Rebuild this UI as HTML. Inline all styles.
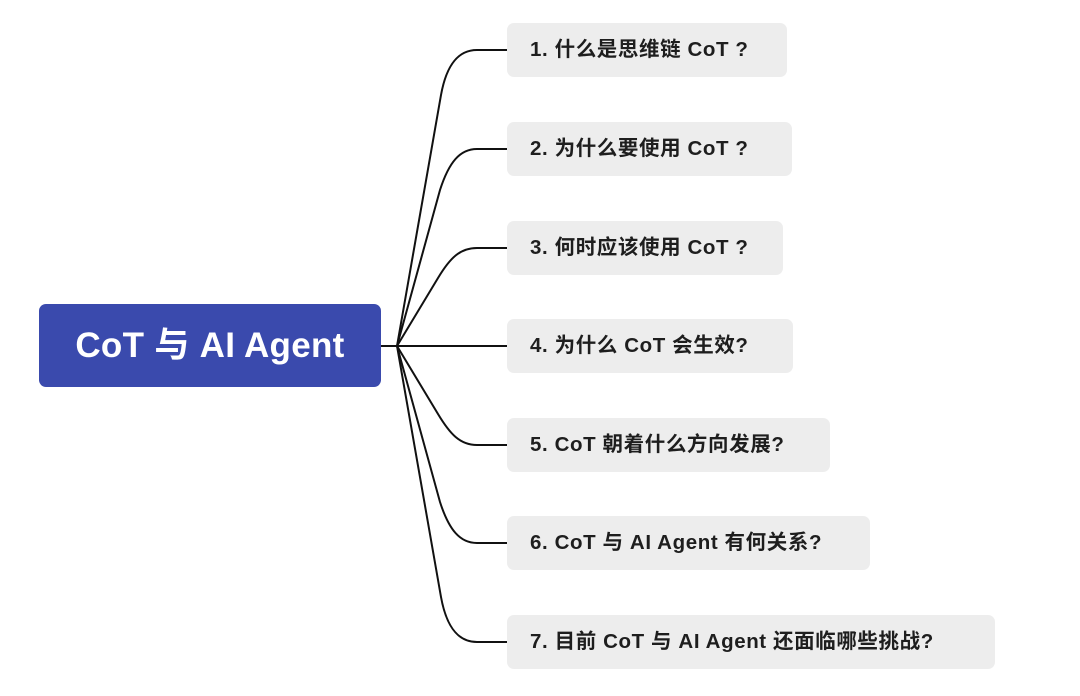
<!DOCTYPE html>
<html><head><meta charset="utf-8"><style>
body{margin:0;width:1080px;height:696px;background:#fff;position:relative;overflow:hidden;font-family:"Liberation Sans","Noto Sans CJK SC",sans-serif}
.c{position:absolute;left:39px;top:304px;width:342px;height:83px;background:#3a4aad;border-radius:7px;color:#fff;font-size:35px;font-weight:bold;line-height:83px;text-align:center;letter-spacing:0.3px}
.b{position:absolute;left:507px;height:54px;background:#ededed;border-radius:7px;color:#1e1e1e;font-size:20.5px;font-weight:bold;line-height:54px;padding-left:23px;box-sizing:border-box;white-space:nowrap;letter-spacing:0.6px}
svg{position:absolute;left:0;top:0}
</style></head><body>
<svg width="1080" height="696" fill="none" stroke="#111" stroke-width="2">
<path d="M381 346H397"/>
<path d="M397 346L441 95C447 62 460 50 477 50H507"/>
<path d="M397 346L440 190C449 162 460 149 477 149H507"/>
<path d="M397 346L438 278C450 258 460 248 477 248H507"/>
<path d="M397 346H507"/>
<path d="M397 346L438 414C450 434 460 445 477 445H507"/>
<path d="M397 346L440 502C449 530 460 543 477 543H507"/>
<path d="M397 346L441 597C447 630 460 642 477 642H507"/>
</svg>
<div class="c">CoT 与 AI Agent</div>
<div class="b" style="top:23px;width:280px">1. 什么是思维链 CoT ?</div>
<div class="b" style="top:122px;width:285px">2. 为什么要使用 CoT ?</div>
<div class="b" style="top:221px;width:276px">3. 何时应该使用 CoT ?</div>
<div class="b" style="top:319px;width:286px">4. 为什么 CoT 会生效?</div>
<div class="b" style="top:418px;width:323px">5. CoT 朝着什么方向发展?</div>
<div class="b" style="top:516px;width:363px">6. CoT 与 AI Agent 有何关系?</div>
<div class="b" style="top:615px;width:488px">7. 目前 CoT 与 AI Agent 还面临哪些挑战?</div>
</body></html>
